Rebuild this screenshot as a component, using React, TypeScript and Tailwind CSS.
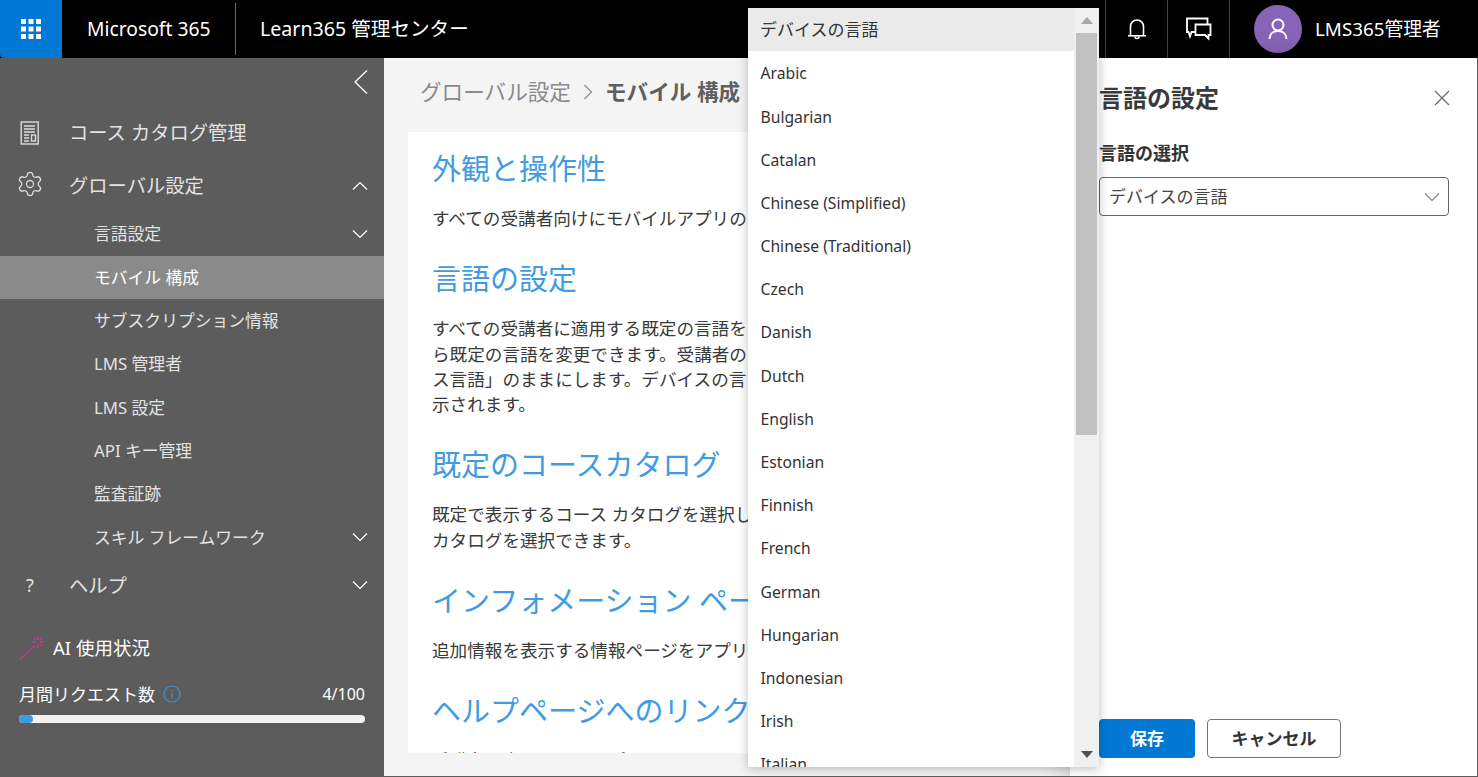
import { Settings } from "lucide-react";

const languages = [
  "Arabic",
  "Bulgarian",
  "Catalan",
  "Chinese (Simplified)",
  "Chinese (Traditional)",
  "Czech",
  "Danish",
  "Dutch",
  "English",
  "Estonian",
  "Finnish",
  "French",
  "German",
  "Hungarian",
  "Indonesian",
  "Irish",
  "Italian",
];

const subItems = ["サブスクリプション情報", "LMS 管理者", "LMS 設定", "API キー管理", "監査証跡"];

function Chevron({ up = false, className = "" }: { up?: boolean; className?: string }) {
  return (
    <svg width="16" height="10" viewBox="0 0 16 10" fill="none" stroke="currentColor" strokeWidth="1.2" className={className}>
      <path d={up ? "M1 8.5 8 1.5l7 7" : "M1 1.5 8 8.5l7-7"} />
    </svg>
  );
}

function WaffleIcon() {
  return (
    <svg width="20" height="20" viewBox="0 0 20 20" fill="#fff">
      {[0, 7.5, 15].map((y) =>
        [0, 7.5, 15].map((x) => <rect key={`${x}-${y}`} x={x} y={y} width="5" height="5" />)
      )}
    </svg>
  );
}

function BellIcon() {
  return (
    <svg width="20" height="24" viewBox="0 0 20 24" fill="none" stroke="#fff" strokeWidth="1.6">
      <path d="M3.5 18.5V9.5a6.5 6.5 0 0 1 13 0v9" />
      <path d="M1 18.8h18" />
      <path d="M8 19.5a2 2 0 0 0 4 0" />
    </svg>
  );
}

function ChatIcon() {
  return (
    <svg width="26" height="24" viewBox="0 0 26 24" fill="none" stroke="#fff" strokeWidth="1.8">
      <path d="M9 15H5.5L4 19.5 2.5 15H1V1.5h20.5V7" />
      <path d="M9.5 7.5h15V18h-2v3.5L19 18H9.5z" />
    </svg>
  );
}

function CatalogIcon() {
  return (
    <svg width="20" height="24" viewBox="0 0 20 24" fill="none" stroke="#dcdcdc" strokeWidth="1.4">
      <rect x="1.2" y="1" width="17" height="22" />
      <path d="M4 5h11M4 8h11M4 11h11M4 14h5M4 17h5M4 20h5" />
      <rect x="11.5" y="14" width="4" height="6" />
    </svg>
  );
}

function WandIcon() {
  return (
    <svg width="26" height="26" viewBox="0 0 26 26" fill="none" stroke="#c23b8e" strokeWidth="1.5">
      <path d="M1 24.5 16 10.5" />
      <path d="M19 1v4M19 9v4M13 7h4M21 7h4M14.8 2.8l2 2M21.2 9.2l2 2M23.2 2.8l-2 2" />
    </svg>
  );
}

function InfoIcon() {
  return (
    <svg width="18" height="18" viewBox="0 0 18 18" fill="none" stroke="#3f8fe0" strokeWidth="1.2">
      <circle cx="9" cy="9" r="8" />
      <path d="M9 8v5.2M9 5v1.5" />
    </svg>
  );
}

function NavItem({ icon, label, chevron }: { icon: React.ReactNode; label: string; chevron?: "up" | "down" }) {
  return (
    <div className="flex h-[53px] items-center text-[19.3px] text-[#e3e3e3]">
      <div className="flex w-[69px] shrink-0 justify-center pr-[9px]">{icon}</div>
      <span className="flex-1 pt-[2px]">{label}</span>
      {chevron && <Chevron up={chevron === "up"} className="mr-4 text-white" />}
    </div>
  );
}

function SubItem({ label, chevron, active }: { label: string; chevron?: boolean; active?: boolean }) {
  return (
    <div className={`flex h-[43.3px] items-center pl-[94px] text-[16.8px] ${active ? "bg-[#8a8a8a] text-white" : "text-[#e3e3e3]"}`}>
      <span className="flex-1">{label}</span>
      {chevron && <Chevron className="mr-4 text-white" />}
    </div>
  );
}

function Section({ title, children }: { title: string; children: React.ReactNode }) {
  return (
    <section>
      <h2 className="whitespace-nowrap text-[29px] leading-[40px] text-[#3f9be3]">{title}</h2>
      <p className="mt-[17px] mb-[28px] whitespace-nowrap text-[17.6px] leading-[25.3px] text-[#3a3a3a]">{children}</p>
    </section>
  );
}

export default function App() {
  return (
    <div className="relative flex h-screen flex-col overflow-hidden border-b border-[#5c5c5c] font-['Noto_Sans','Noto_Sans_CJK_JP',sans-serif]">
      {/* Top bar */}
      <header className="flex h-[58px] shrink-0 items-stretch bg-black text-white">
        <div className="flex w-[62px] items-center justify-center rounded-bl-sm bg-[#0078d4]">
          <WaffleIcon />
        </div>
        <div className="flex w-[173px] items-center pl-[25px] text-[19.3px]">Microsoft 365</div>
        <div className="my-[3px] w-px bg-[#666]" />
        <div className="flex flex-1 items-center pl-6 text-[19.6px]">Learn365 管理センター</div>
        <div className="w-[62px] border-r border-[#444]" />
        <div className="flex w-[62px] items-center justify-center border-r border-[#444]">
          <BellIcon />
        </div>
        <div className="flex w-[62px] items-center justify-center border-r border-[#444]">
          <ChatIcon />
        </div>
        <div className="flex w-[248px] items-center pl-6">
          <div className="flex size-12 items-center justify-center rounded-full bg-[#8764b8]">
            <svg width="20" height="22" viewBox="0 0 20 22" fill="none" stroke="#fff" strokeWidth="2">
              <circle cx="10" cy="7" r="5.5" />
              <path d="M1.5 21c0-5 3.5-8 8.5-8s8.5 3 8.5 8" />
            </svg>
          </div>
          <span className="ml-[13px] text-[18.8px]">LMS365管理者</span>
        </div>
      </header>

      <div className="flex min-h-0 flex-1">
        {/* Sidebar */}
        <aside className="w-[384px] shrink-0 bg-[#5c5c5c]">
          <div className="flex h-[48.4px] items-center justify-end pr-[15px]">
            <svg width="16" height="26" viewBox="0 0 16 26" fill="none" stroke="#fff" strokeWidth="1.3">
              <path d="M14 1.5 2 13l12 11.5" />
            </svg>
          </div>
          <NavItem icon={<CatalogIcon />} label="コース カタログ管理" />
          <NavItem
            icon={<Settings size={28} strokeWidth={1.1} className="-mt-1 text-[#dcdcdc]" />}
            label="グローバル設定"
            chevron="up"
          />
          <SubItem label="言語設定" chevron />
          <SubItem label="モバイル 構成" active />
          {subItems.map((s) => (
            <SubItem key={s} label={s} />
          ))}
          <SubItem label="スキル フレームワーク" chevron />
          <NavItem icon={<span className="text-[18px]">?</span>} label="ヘルプ" chevron="down" />

          <div className="mt-[22px] flex items-center pl-[19px] text-[18.5px] text-white">
            <WandIcon />
            <span className="ml-2">AI 使用状況</span>
          </div>
          <div className="mt-[20px] flex items-center justify-between pl-[19px] pr-[19px] text-[17px] text-white">
            <span className="flex items-center gap-2">
              月間リクエスト数
              <InfoIcon />
            </span>
            <span className="text-[16px]">4/100</span>
          </div>
          <div className="mx-[19px] mt-2 h-2 rounded-full bg-[#f3f2f1]">
            <div className="h-2 rounded-full bg-[#3f9be0]" style={{ width: "4%" }} />
          </div>
        </aside>

        {/* Main content */}
        <main className="flex min-w-0 flex-1 flex-col overflow-hidden bg-[#f4f4f4] pb-[23px]">
          <div className="flex h-[74px] shrink-0 items-center pb-[6px] pl-[36px] text-[21.6px]">
            <span className="text-[#8a8a8a]">グローバル設定</span>
            <Chevron className="mx-[9px] -rotate-90 text-[#8a8a8a]" />
            <span className="font-bold text-[#5f5f5f]">モバイル 構成</span>
          </div>
          <div className="ml-6 min-h-0 flex-1 overflow-hidden bg-white pl-6 pt-[17px]">
            <Section title="外観と操作性">すべての受講者向けにモバイルアプリの</Section>
            <Section title="言語の設定">
              すべての受講者に適用する既定の言語を
              <br />
              ら既定の言語を変更できます。受講者の
              <br />
              ス言語」のままにします。デバイスの言
              <br />
              示されます。
            </Section>
            <Section title="既定のコースカタログ">
              既定で表示するコース カタログを選択し
              <br />
              カタログを選択できます。
            </Section>
            <Section title="インフォメーション ページ">追加情報を表示する情報ページをアプリ</Section>
            <Section title="ヘルプページへのリンク">受講者に表示するヘルプページのリンクを</Section>
          </div>
        </main>
      </div>

      {/* Settings flyout */}
      <div className="absolute bottom-0 right-0 top-[58px] flex w-[408px] flex-col border-r border-[#5c5c5c] bg-white pl-[29px] shadow-[-6px_0_24px_rgba(0,0,0,0.22)]">
        <div className="flex h-[79px] items-center justify-between pr-[27px]">
          <h3 className="text-[24px] font-bold text-[#3a3a3a]">言語の設定</h3>
          <svg width="16" height="16" viewBox="0 0 16 16" fill="none" stroke="#666" strokeWidth="1.1">
            <path d="M1 1l14 14M15 1 1 15" />
          </svg>
        </div>
        <label className="mt-px text-[18px] font-bold leading-[30px] text-[#333]">言語の選択</label>
        <div className="mt-[9px] flex h-[39px] w-[350px] items-center justify-between rounded-sm border border-[#666] pl-[9px] pr-[8px] text-[17px] text-[#444]">
          デバイスの言語
          <Chevron className="text-[#888]" />
        </div>
        <div className="mt-auto mb-[18px] flex gap-3">
          <button className="h-[39px] w-24 rounded-sm bg-[#0078d4] text-[17px] font-bold text-white">保存</button>
          <button className="h-[39px] w-[134px] rounded-sm border border-[#777] bg-white text-[17px] font-bold text-[#333]">
            キャンセル
          </button>
        </div>
      </div>

      {/* Open language list */}
      <div className="absolute left-[748px] top-2 flex h-[759px] w-[351px] overflow-hidden bg-white shadow-[0_2px_10px_rgba(0,0,0,0.25)]">
        <ul className="min-w-0 flex-1 text-[15.7px] text-[#333]">
          <li className="flex h-[43px] items-center bg-[#ebeaea] pl-3 text-[17px]">デバイスの言語</li>
          {languages.map((l) => (
            <li key={l} className="flex h-[43.2px] items-center pl-[12.5px] pt-[3px]">
              {l}
            </li>
          ))}
        </ul>
        <div className="flex w-[25px] shrink-0 flex-col bg-[#f0f0f0] pl-[2px] pr-[2px]">
          <div className="flex h-[25px] items-center justify-center">
            <svg width="12" height="7" viewBox="0 0 12 7" fill="#a8a8a8">
              <path d="M6 0l6 7H0z" />
            </svg>
          </div>
          <div className="h-[402px] bg-[#c1c1c1]" />
          <div className="mt-auto flex h-[25px] items-center justify-center">
            <svg width="12" height="7" viewBox="0 0 12 7" fill="#505050">
              <path d="M0 0h12L6 7z" />
            </svg>
          </div>
        </div>
      </div>
    </div>
  );
}
